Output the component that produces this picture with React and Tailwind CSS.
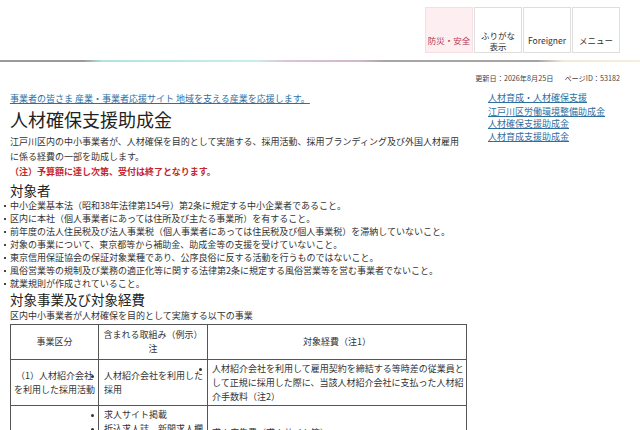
export default function App() {
  const navBtn = "w-[48px] h-[46px] border flex flex-col text-[8.5px] leading-[11px] text-center";
  const bullets = [
    "中小企業基本法（昭和38年法律第154号）第2条に規定する中小企業者であること。",
    "区内に本社（個人事業者にあっては住所及び主たる事業所）を有すること。",
    "前年度の法人住民税及び法人事業税（個人事業者にあっては住民税及び個人事業税）を滞納していないこと。",
    "対象の事業について、東京都等から補助金、助成金等の支援を受けていないこと。",
    "東京信用保証協会の保証対象業種であり、公序良俗に反する活動を行うものではないこと。",
    "風俗営業等の規制及び業務の適正化等に関する法律第2条に規定する風俗営業等を営む事業者でないこと。",
    "就業規則が作成されていること。",
  ];
  return (
    <div className="w-[640px] h-[430px] overflow-hidden bg-white text-[#333] font-['Noto_Sans_CJK_JP','Noto_Sans',sans-serif]">
      <header className="h-[60px] flex justify-end items-start pt-[7px] pr-[20px] gap-[1px]">
        <div className={navBtn + " bg-[#fdeff1] border-[#f6dfe3] text-[#b3344c]"}>
          <div className="h-[21px]" />
          <div className="flex-1 flex items-center justify-center">防災・安全</div>
        </div>
        <div className={navBtn + " border-[#dedede]"}>
          <div className="h-[21px]" />
          <div className="flex-1 flex items-center justify-center">ふりがな<br />表示</div>
        </div>
        <div className={navBtn + " border-[#dedede]"}>
          <div className="h-[21px]" />
          <div className="flex-1 flex items-center justify-center">Foreigner</div>
        </div>
        <div className={navBtn + " border-[#dedede]"}>
          <div className="h-[21px]" />
          <div className="flex-1 flex items-center justify-center">メニュー</div>
        </div>
      </header>
      <div className="h-[1.5px] bg-[linear-gradient(to_right,#9a9a9a_0%,#9a9a9a_13%,#b3e2e2_16%,#c8eded_40%,#dcc3d1_45%,#d3b7c7_56%,#a9a5a5_60%,#a6a3a3_84%,#f3e8d6_88%,#f6eddd_100%)]" />
      <div className="px-[10px]">
        <div className="mt-[10px] pr-[10px] flex justify-end gap-[11px] text-[7.2px] leading-[12px] text-[#444]">
          <span>更新日：2026年8月25日</span>
          <span>ページID：53182</span>
        </div>
        <div className="flex gap-[22px] mt-[8px]">
          <main className="w-[456px] shrink-0">
            <a className="block text-[9px] leading-[13px] text-[#2f6f9f] underline">事業者の皆さま 産業・事業者応援サイト 地域を支える産業を応援します。</a>
            <h1 className="mt-[2.5px] text-[18px] leading-[24px] text-[#222]">人材確保支援助成金</h1>
            <p className="mt-[2.5px] text-[9px] leading-[15px]">
              江戸川区内の中小事業者が、人材確保を目的として実施する、採用活動、採用ブランディング及び外国人材雇用<br />
              に係る経費の一部を助成します。
            </p>
            <p className="text-[9px] leading-[15px] text-[#c3262e] font-semibold">（注）予算額に達し次第、受付は終了となります。</p>
            <h2 className="mt-[2px] text-[13.5px] leading-[18px] text-[#222]">対象者</h2>
            <ul className="-ml-[7px] text-[9px] leading-[13px]">
              {bullets.map((b) => (
                <li key={b} className="flex items-start">
                  <span className="w-[7px] shrink-0 pt-[6px] pl-[0.5px]">
                    <span className="block w-[2.5px] h-[2.5px] bg-[#444]" />
                  </span>
                  <span>{b}</span>
                </li>
              ))}
            </ul>
            <h2 className="text-[13.5px] leading-[18px] text-[#222]">対象事業及び対象経費</h2>
            <p className="mt-[1.5px] text-[9px] leading-[13px]">区内中小事業者が人材確保を目的として実施する以下の事業</p>
            <table className="mt-[2px] w-[456px] table-fixed border-collapse text-[9px] leading-[14px]">
              <colgroup>
                <col className="w-[88px]" />
                <col className="w-[109px]" />
                <col className="w-[259px]" />
              </colgroup>
              <thead>
                <tr>
                  <th className="border border-[#555] font-normal py-[3px] text-center">事業区分</th>
                  <th className="border border-[#555] font-normal py-[3px] text-center">含まれる取組み（例示）<br />注</th>
                  <th className="border border-[#555] font-normal py-[3px] text-center">対象経費（注1）</th>
                </tr>
              </thead>
              <tbody>
                <tr>
                  <td className="border border-[#555] py-[1.5px] px-[2px] text-center">（1）人材紹介会社<br />を利用した採用活動</td>
                  <td className="border border-[#555] py-[1.5px] pl-[5px] pr-[2px]">
                    <ul className="list-disc">
                      <li>人材紹介会社を利用した<br />採用</li>
                    </ul>
                  </td>
                  <td className="border border-[#555] py-[1.5px] pl-[4px] pr-[2px]">
                    <ul className="list-disc">
                      <li>人材紹介会社を利用して雇用契約を締結する等時差の従業員と<br />して正規に採用した際に、当該人材紹介会社に支払った人材紹<br />介手数料（注2）</li>
                    </ul>
                  </td>
                </tr>
                <tr>
                  <td className="border border-[#555] pt-[36px] pb-[1.5px] px-[2px] text-center">（2）求人広告</td>
                  <td className="border border-[#555] py-[1.5px] pl-[5px] pr-[2px]">
                    <ul className="list-disc">
                      <li>求人サイト掲載</li>
                      <li>折込求人誌、新聞求人欄</li>
                      <li>フリーペーパー</li>
                      <li>ハローワーク</li>
                    </ul>
                  </td>
                  <td className="border border-[#555] pt-[1.5px] pb-[6px] pl-[4px] pr-[2px]">
                    <ul className="list-disc">
                      <li>求人広告費（求人サイト等）</li>
                    </ul>
                  </td>
                </tr>
              </tbody>
            </table>
          </main>
          <aside className="flex flex-col text-[9px] leading-[12.5px]">
            <a className="text-[#2f6f9f] underline mb-[1.5px]">人材育成・人材確保支援</a>
            <a className="text-[#2f6f9f] underline">江戸川区労働環境整備助成金</a>
            <a className="text-[#2f6f9f] underline">人材確保支援助成金</a>
            <a className="text-[#2f6f9f] underline">人材育成支援助成金</a>
          </aside>
        </div>
      </div>
    </div>
  );
}
